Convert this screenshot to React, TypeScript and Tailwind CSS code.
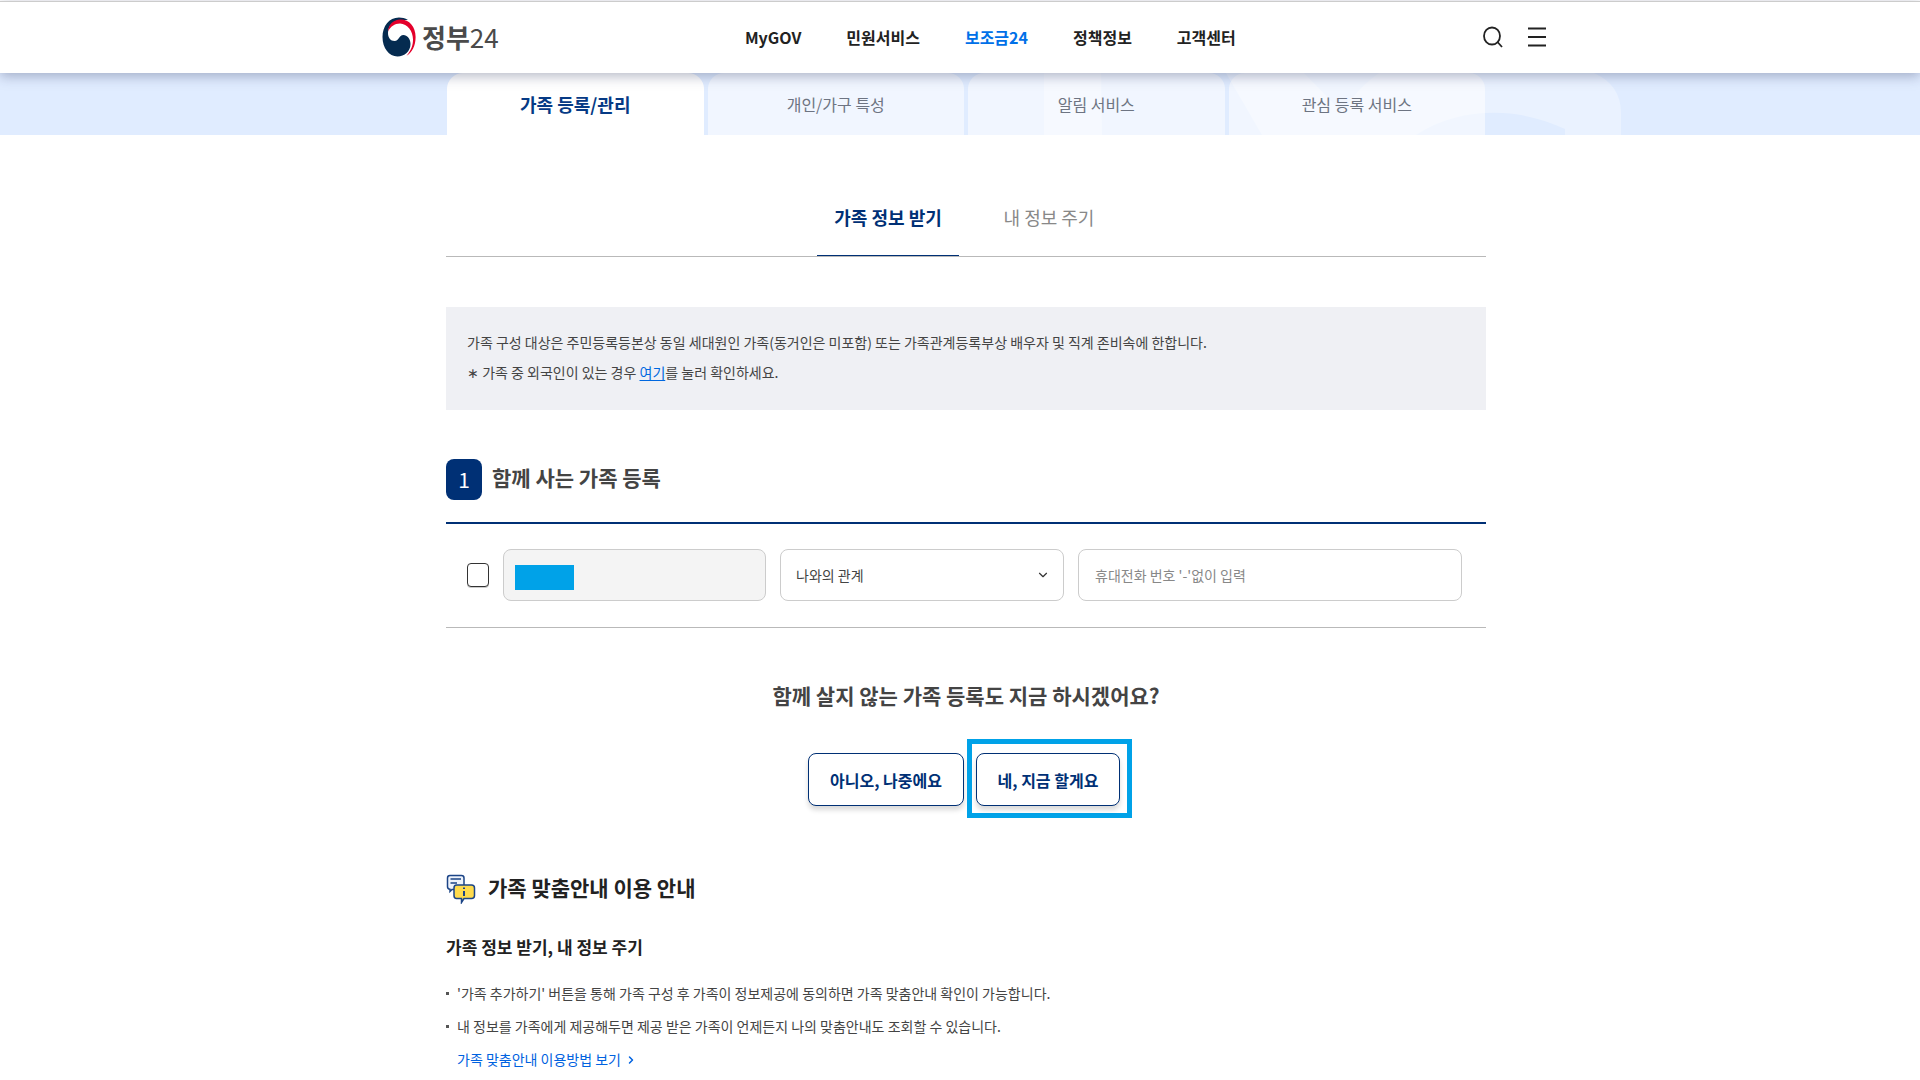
import { useState } from 'react';
import { ChevronDown, ChevronRight } from 'lucide-react';

const navItems = ['MyGOV', '민원서비스', '보조금24', '정책정보', '고객센터'];
const tabs = ['가족 등록/관리', '개인/가구 특성', '알림 서비스', '관심 등록 서비스'];
const subTabs = ['가족 정보 받기', '내 정보 주기'];

function GovLogo() {
  return (
    <svg viewBox="0 0 34 40" className="h-10 w-[34px]" aria-hidden="true">
      <path
        d="M26 3C23 1 20 .4 17 .4C7 .4 .5 9 .5 20C.5 31 7 39.4 15.500 39.400C22.500 39.400 28.500 34.500 28.500 27C28.500 21.500 25 18 21.500 18C16.500 18 17.500 24 12.500 24C8.500 24 6 20.500 6 16C6 9 11 4 18 3Z"
        fill="#052b50"
      />
      <path
        d="M6 14.500C6.500 7.500 11.500 2.600 18.500 2.600C27.500 2.600 33.600 10 33.600 20C33.600 29 30 35.500 24.500 38.800C29.500 33 31 28 31 22.500C31 14 25.500 7 18 6.500C12.500 6.500 8.500 9.500 6 14.500Z"
        fill="#e4002b"
      />
    </svg>
  );
}

function SearchIcon() {
  return (
    <svg viewBox="0 0 22 24" className="h-6 w-[22px]" fill="none" stroke="#222" strokeWidth="1.8" aria-hidden="true">
      <ellipse cx="10" cy="11" rx="8" ry="8.5" />
      <path d="M15.500 17L20 22" />
    </svg>
  );
}

function MenuIcon() {
  return (
    <svg viewBox="0 0 18 20" className="h-5 w-[18px]" stroke="#222" strokeWidth="1.8" aria-hidden="true">
      <path d="M0 1.500H18M0 10H18M0 18.500H18" />
    </svg>
  );
}

function GuideIcon() {
  return (
    <svg viewBox="0 0 30 30" className="mt-1 h-[30px] w-[30px]" fill="none" stroke="#1c4587" strokeWidth="1.5" aria-hidden="true">
      <path d="M4 1.500H15.500Q18 1.500 18 4V13Q18 15.500 15.500 15.500H6L4 17.500V15.300Q1.500 15 1.500 12.500V4Q1.500 1.500 4 1.500Z" fill="#eef3fb" />
      <path d="M4.500 5H15M4.500 9H11" />
      <path d="M10.500 11H25.500Q28.500 11 28.500 14V21.500Q28.500 24.500 25.500 24.500H18L15.500 28.500V24.500H10.500Q8 24.500 8 21.500V14Q8 11 10.500 11Z" fill="#ffdb4d" />
      <path d="M18 17V22M18 13.500V15" strokeWidth="2" />
    </svg>
  );
}

export default function App() {
  const [tab, setTab] = useState(0);
  const [subTab, setSubTab] = useState(0);

  return (
    <div className="h-screen overflow-hidden bg-white font-['Noto_Sans_CJK_KR',sans-serif] text-[#444]">
      <header className="relative z-10 border-t border-[#ccc] bg-white mt-px pl-2 shadow-[0_3px_12px_rgba(40,50,90,0.35)]">
        <div className="mx-auto flex h-[71px] max-w-[1164px] items-center justify-between pb-0.5">
          <a href="#" className="flex items-center gap-1.5 text-[26px] leading-8 text-[#4a4a4a]">
            <GovLogo />
            <span>
              <b>정부</b>24
            </span>
          </a>
          <nav className="flex gap-[45px] text-base font-bold text-[#222]">
            {navItems.map((item) => (
              <a key={item} href="#" className={item === '보조금24' ? 'text-[#0070e8]' : ''}>
                {item}
              </a>
            ))}
          </nav>
          <div className="flex items-center gap-6">
            <button aria-label="검색">
              <SearchIcon />
            </button>
            <button aria-label="전체메뉴">
              <MenuIcon />
            </button>
          </div>
        </div>
      </header>

      <div className="relative bg-[#e0ecff] pl-3">
        {/* 배경 장식 */}
        <svg viewBox="0 0 580 62" className="absolute top-0 left-1/2 ml-[84px] h-[62px] w-[580px]" aria-hidden="true">
          <path d="M0 62V0H57L58 62ZM182 0H260L320 62H218Z" fill="#eaf2ff" />
          <path d="M335 0H550Q577 12 577 40V62H521V56C480 36 420 31 372 62H290Q300 25 335 0Z" fill="#eaf2ff" />
        </svg>
        <div className="relative mx-auto grid h-[62px] max-w-[1038px] grid-cols-4 gap-1 pb-0">
          {tabs.map((label, i) => (
            <button
              key={label}
              onClick={() => setTab(i)}
              className={
                i === tab
                  ? 'rounded-t-2xl bg-white text-lg font-bold text-[#063a85]'
                  : 'rounded-t-2xl bg-white/55 text-base text-[#6d7482]'
              }
            >
              {label}
            </button>
          ))}
        </div>
      </div>

      <main className="pl-3">
        <div className="mx-auto max-w-[1040px]">
          <div className="mt-[46px] flex h-[76px] justify-center border-b border-[#b9b9b9] pl-6">
            {subTabs.map((label, i) => (
              <button
                key={label}
                onClick={() => setSubTab(i)}
                className={
                  i === subTab
                    ? 'w-[142px] border-b border-[#003075] pb-0.5 text-lg font-bold text-[#003075]'
                    : 'w-[180px] border-b border-transparent pb-0.5 text-lg text-[#888]'
                }
              >
                {label}
              </button>
            ))}
          </div>

          <div className="mt-[50px] bg-[#eff0f4] px-[21px] pt-5 pb-[23px] text-sm leading-[30px]">
            <p>
              가족 구성 대상은 주민등록등본상 동일 세대원인 가족(동거인은 미포함) 또는 가족관계등록부상 배우자 및 직계 존비속에 한합니다.
            </p>
            <p>
              ∗ 가족 중 외국인이 있는 경우{' '}
              <a href="#" className="text-[#0068e0] underline underline-offset-2">
                여기
              </a>
              를 눌러 확인하세요.
            </p>
          </div>

          <section>
            <div className="mt-[49px] flex items-center gap-2.5 border-b-2 border-[#003075] pb-[22px]">
              <span className="flex h-[41px] w-9 items-center justify-center rounded-lg bg-[#003075] text-[21px] text-white">1</span>
              <h2 className="pb-1 text-[21px] font-bold">함께 사는 가족 등록</h2>
            </div>
            <div className="flex items-center border-b border-[#b9b9b9] pt-[25px] pr-6 pb-[26px] pl-[21px] text-sm">
              <input
                type="checkbox"
                aria-label="가족 선택"
                className="mr-3.5 h-6 w-[22px] appearance-none rounded border border-[#333] bg-white shadow-[0_1px_0_#ccc] checked:bg-[#003075]"
              />
              <div className="relative mr-3.5 flex-[263]">
                <input readOnly aria-label="이름" className="h-[52px] w-full rounded-lg border border-[#ccc] bg-[#f4f4f4] px-4" />
                {/* 이름 가림 */}
                <span className="absolute top-4 left-3 h-[25px] w-[59px] bg-[#00a2e8]" />
              </div>
              <div className="relative mr-3.5 flex-[284]">
                <select aria-label="나와의 관계" className="h-[52px] w-full appearance-none rounded-lg border border-[#ccc] bg-white px-[15px]">
                  <option>나와의 관계</option>
                  <option>배우자</option>
                  <option>부모</option>
                  <option>자녀</option>
                </select>
                <ChevronDown className="pointer-events-none absolute top-[19px] right-3.5 h-3.5 w-3.5 text-[#333]" />
              </div>
              <div className="flex-[384]">
                <input
                  type="tel"
                  aria-label="휴대전화 번호"
                  placeholder="휴대전화 번호 '-'없이 입력"
                  className="h-[52px] w-full rounded-lg border border-[#ccc] px-4 placeholder:text-[#888]"
                />
              </div>
            </div>
          </section>

          <section className="mt-[51px] flex flex-col items-center">
            <h2 className="text-[21px] leading-8 font-bold">함께 살지 않는 가족 등록도 지금 하시겠어요?</h2>
            <div className="mt-7 flex items-start gap-[3px] pl-2">
              <button className="mt-3.5 h-[53px] w-[156px] rounded-lg border border-[#003075] bg-white font-bold text-[#003075] shadow-[0_4px_5px_rgba(0,0,0,0.15)]">
                아니오, 나중에요
              </button>
              <div className="border-[5px] border-[#00a2e8] pt-[9px] pr-[7px] pb-[7px] pl-1">
                <button className="h-[53px] w-36 rounded-lg border border-[#003075] bg-white font-bold text-[#003075] shadow-[0_4px_5px_rgba(0,0,0,0.15)]">
                  네, 지금 할게요
                </button>
              </div>
            </div>
          </section>

          <section className="mt-[52px]">
            <div className="flex items-center gap-3 text-[#222]">
              <GuideIcon />
              <h2 className="text-[21px] leading-8 font-bold">가족 맞춤안내 이용 안내</h2>
            </div>
            <h3 className="mt-[29px] text-[17px] leading-7 font-bold text-[#222]">가족 정보 받기, 내 정보 주기</h3>
            <ul className="mt-4 text-sm leading-[33px]">
              {[
                "'가족 추가하기' 버튼을 통해 가족 구성 후 가족이 정보제공에 동의하면 가족 맞춤안내 확인이 가능합니다.",
                '내 정보를 가족에게 제공해두면 제공 받은 가족이 언제든지 나의 맞춤안내도 조회할 수 있습니다.',
              ].map((text) => (
                <li key={text} className="flex items-center gap-2">
                  <span className="h-[3px] w-[3px] bg-[#555]" />
                  {text}
                </li>
              ))}
            </ul>
            <a href="#" className="flex items-center gap-1 pl-[11px] text-sm leading-[33px] text-[#0062e0]">
              가족 맞춤안내 이용방법 보기
              <ChevronRight className="h-3 w-3" strokeWidth={3} />
            </a>
          </section>
        </div>
      </main>
    </div>
  );
}
